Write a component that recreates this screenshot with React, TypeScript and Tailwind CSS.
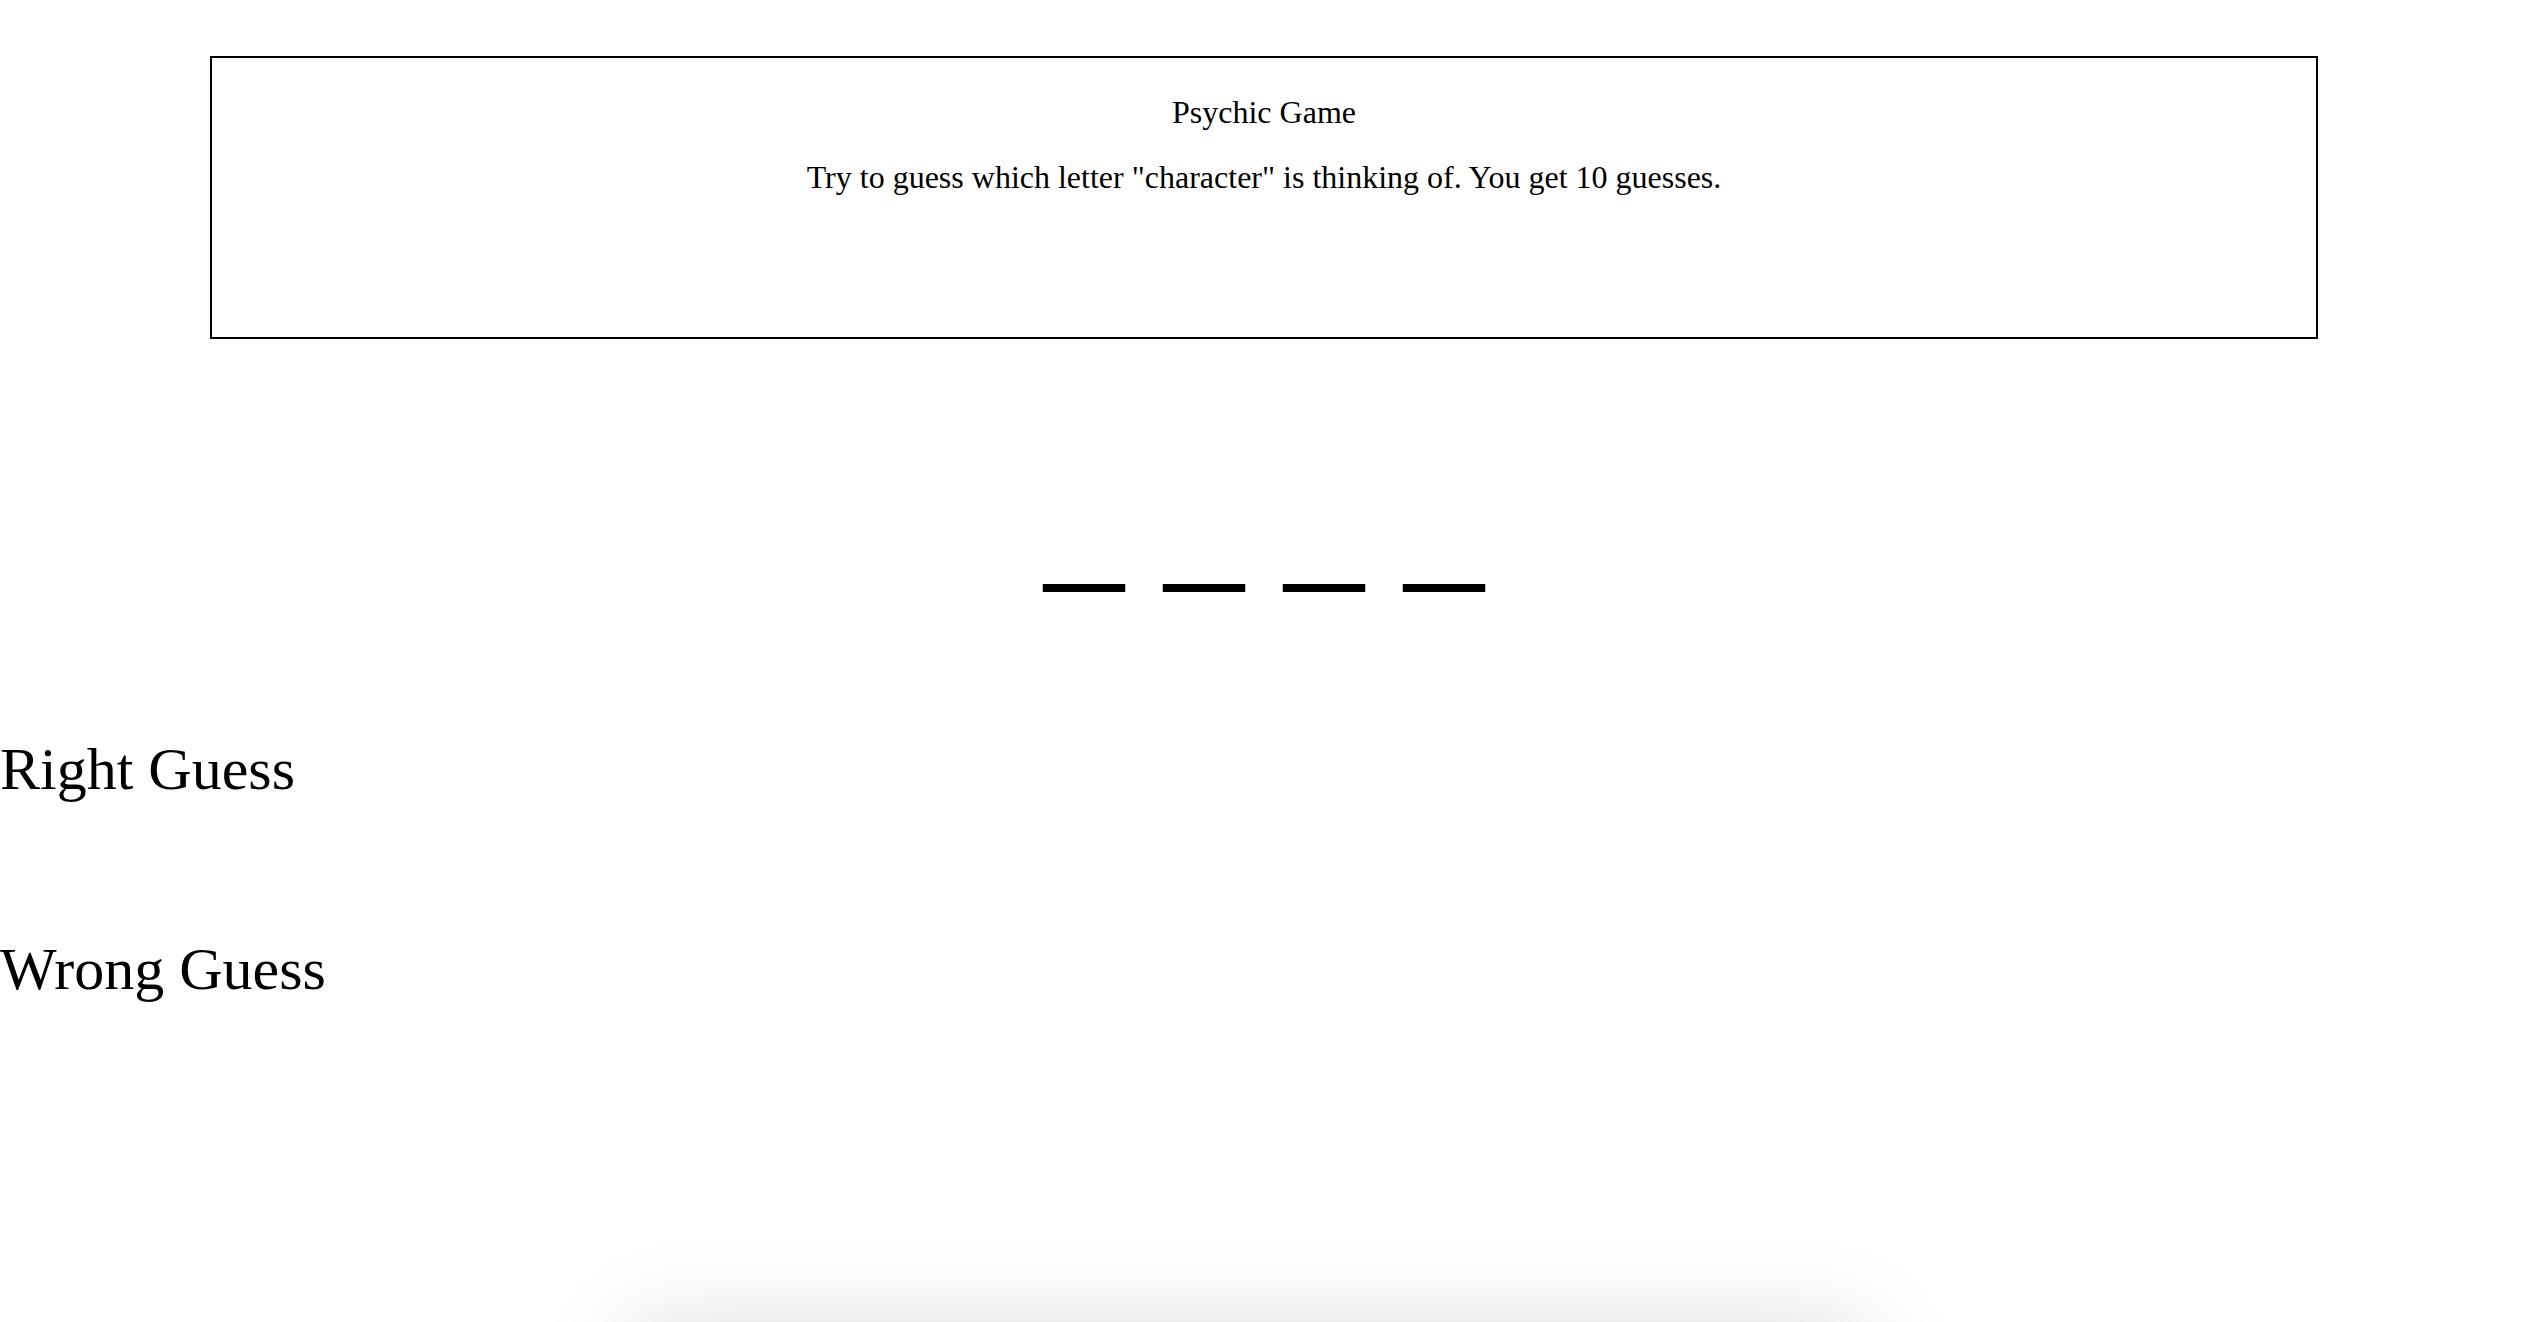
export default function App() {
  return (
    <div
      className="h-screen overflow-hidden bg-white text-black"
      style={{ fontFamily: '"Liberation Serif", "Times New Roman", serif' }}
    >
      <div className="pt-[56px]">
        <div className="ml-[210px] h-[283px] w-[2108px] border-2 border-black pt-[36px] text-center text-[32px] leading-[36px]">
          <p>Psychic Game</p>
          <p className="mt-[29px]">
            Try to guess which letter "character" is thinking of. You get 10 guesses.
          </p>
        </div>

        <div className="ml-[210px] mt-[98px] w-[2108px] text-center text-[160px] leading-none whitespace-pre">
          _ _ _ _
        </div>

        <h1 className="mt-[142px] text-[60px] leading-none">Right Guess</h1>
        <h1 className="mt-[140px] text-[60px] leading-none">Wrong Guess</h1>

        <div className="ml-[631px] mt-[332px] h-[300px] w-[1236px] bg-white shadow-[0_0_90px_rgba(0,0,0,0.16)]" />
      </div>
    </div>
  );
}
